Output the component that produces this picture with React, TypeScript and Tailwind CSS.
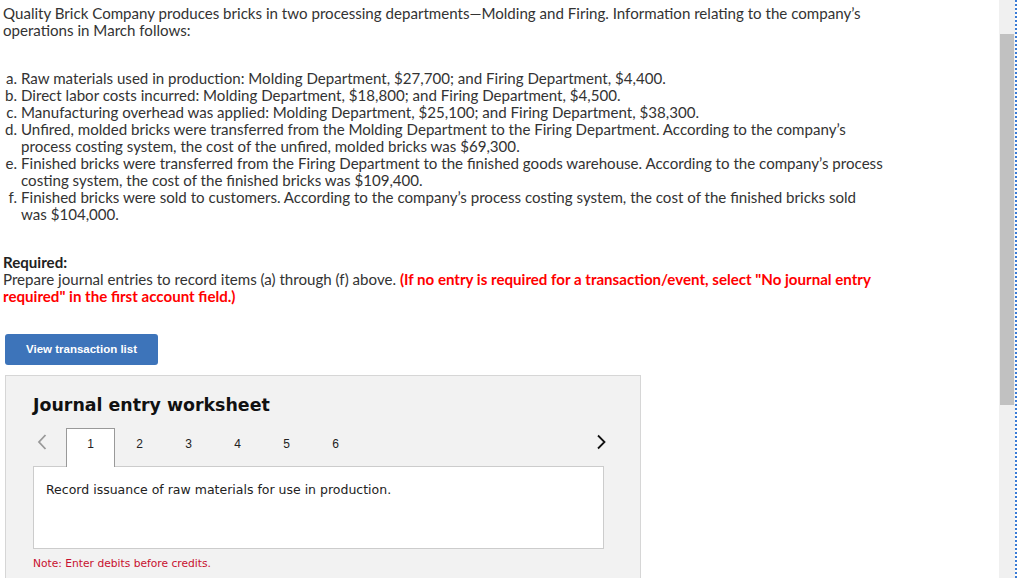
import React from "react";

const items: { m: string; lines: string[] }[] = [
  { m: "a.", lines: ["Raw materials used in production: Molding Department, $27,700; and Firing Department, $4,400."] },
  { m: "b.", lines: ["Direct labor costs incurred: Molding Department, $18,800; and Firing Department, $4,500."] },
  { m: "c.", lines: ["Manufacturing overhead was applied: Molding Department, $25,100; and Firing Department, $38,300."] },
  {
    m: "d.",
    lines: [
      "Unfired, molded bricks were transferred from the Molding Department to the Firing Department. According to the company’s",
      "process costing system, the cost of the unfired, molded bricks was $69,300.",
    ],
  },
  {
    m: "e.",
    lines: [
      "Finished bricks were transferred from the Firing Department to the finished goods warehouse. According to the company’s process",
      "costing system, the cost of the finished bricks was $109,400.",
    ],
  },
  {
    m: "f.",
    lines: [
      "Finished bricks were sold to customers. According to the company’s process costing system, the cost of the finished bricks sold",
      "was $104,000.",
    ],
  },
];

const tabs = ["1", "2", "3", "4", "5", "6"];

export default function App() {
  return (
    <div className="flex h-[578px] w-[1024px] overflow-hidden bg-white">
      <main className="flex-1 min-w-0 whitespace-nowrap pl-[3px] pt-[5px] font-['Lato',sans-serif] text-[15.1px] leading-[17px] text-[#333]">
        <p>
          Quality Brick Company produces bricks in two processing departments—Molding and Firing. Information relating to the company’s
          <br />
          operations in March follows:
        </p>

        <ol className="mt-[31px]">
          {items.map((it) => (
            <li key={it.m} className="flex">
              <span className="w-[18px] shrink-0 pr-[4px] text-right">{it.m}</span>
              <span>
                {it.lines.map((l, i) => (
                  <span key={i} className="block">
                    {l}
                  </span>
                ))}
              </span>
            </li>
          ))}
        </ol>

        <div className="mt-[31px] font-bold text-[#222]">Required:</div>
        <p>
          Prepare journal entries to record items (a) through (f) above.{" "}
          <span className="font-bold text-[#f00]">
            (If no entry is required for a transaction/event, select "No journal entry
            <br />
            required" in the first account field.)
          </span>
        </p>

        <button className="ml-[2px] mt-[29px] flex h-[31px] w-[153px] items-center justify-center rounded-[3px] bg-[#3d74ba] font-[Liberation_Sans,Arial,sans-serif] text-[11.5px] font-bold text-white">
          View transaction list
        </button>

        <section className="ml-[2px] mt-[10px] h-[220px] w-[636px] border border-[#d6d6d6] bg-[#f2f2f2] pl-[27px]">
          <h2 className="mt-[19px] font-[DejaVu_Sans,Verdana,sans-serif] text-[17.4px] font-bold leading-[20px] text-[#111]">
            Journal entry worksheet
          </h2>

          <div className="mt-[13px] flex h-[39px] w-[570px] items-start">
            <span className="w-[33px] pl-[3px] pt-[5px]">
              <svg width="12" height="18" viewBox="0 0 12 18">
                <path d="M9.5 2 L3 9 L9.5 16" fill="none" stroke="#999" strokeWidth="1.8" />
              </svg>
            </span>
            {tabs.map((t, i) => (
              <div
                key={t}
                className={
                  i === 0
                    ? "relative z-10 flex h-[39px] w-[49px] justify-center border border-b-0 border-[#999] bg-white pt-[7px] font-[Liberation_Sans,Arial,sans-serif] text-[12px] text-[#222]"
                    : "flex h-[38px] w-[49px] justify-center pt-[8px] font-[Liberation_Sans,Arial,sans-serif] text-[12px] text-[#222]"
                }
              >
                {t}
              </div>
            ))}
            <span className="ml-auto mr-[-4px] pt-[5px]">
              <svg width="12" height="18" viewBox="0 0 12 18">
                <path d="M3 2.5 L9.5 9 L3 15.5" fill="none" stroke="#111" strokeWidth="1.8" />
              </svg>
            </span>
          </div>

          <div className="-mt-px h-[83px] w-[571px] border border-[#ccc] bg-white px-[12px] pt-[15px] font-[DejaVu_Sans,Verdana,sans-serif] text-[12.5px] leading-[15px] text-[#222]">
            Record issuance of raw materials for use in production.
          </div>

          <div className="mt-[8px] font-[DejaVu_Sans,Verdana,sans-serif] text-[10.7px] leading-[14px] text-[#c8102e]">
            Note: Enter debits before credits.
          </div>
        </section>
      </main>

      <div className="flex w-[16px] shrink-0 flex-col bg-[#f0f0f0] pl-[1px] pt-[34px]">
        <div className="h-[371px] w-[14px] bg-[#c1c1c1]" />
      </div>
      <div className="w-[9px] shrink-0 border-l-2 border-dotted border-[#3a7bd5]" />
    </div>
  );
}
